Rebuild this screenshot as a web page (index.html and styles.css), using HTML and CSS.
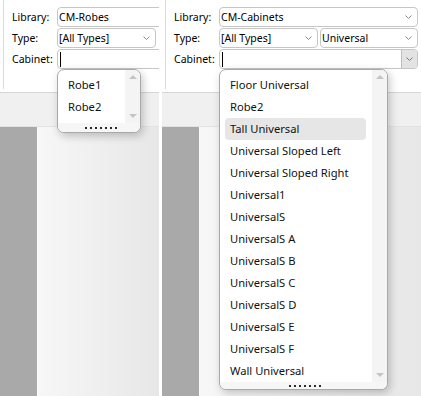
FILE: index.html
```html
<!DOCTYPE html>
<html>
<head>
<meta charset="utf-8">
<link rel="stylesheet" href="styles.css">
</head>
<body>
<div class="panel panel-left">
  <div class="top">
    <div class="group">
      <div class="form">
        <div class="label">Library:</div>
        <div class="ctrl"><div class="box wide"><span class="val">CM-Robes</span></div></div>
        <div class="label">Type:</div>
        <div class="ctrl">
          <div class="box half"><span class="val">[All Types]</span><svg class="chev" width="7" height="4" viewBox="0 0 7 4"><polyline points="0.5,0.5 3.5,3.5 6.5,0.5" fill="none" stroke="#8a8a8a" stroke-width="1"/></svg></div>
        </div>
        <div class="label">Cabinet:</div>
        <div class="ctrl"><div class="box wide"><span class="caret"></span></div></div>
      </div>
    </div>
  </div>
  <div class="strip"></div>
  <div class="canvas"><div class="dark"></div><div class="light"></div></div>
  <div class="popup popup-small">
    <div class="body">
      <div class="list list-small">
        <div class="item">Robe1</div>
        <div class="item">Robe2</div>
      </div>
      <div class="track">
        <span class="arrow up"></span>
        <span class="arrow down"></span>
      </div>
    </div>
    <div class="grip"><i></i><i></i><i></i><i></i><i></i><i></i><i></i></div>
  </div>
</div>

<div class="panel panel-right">
  <div class="top">
    <div class="group">
      <div class="form">
        <div class="label">Library:</div>
        <div class="ctrl"><div class="box wide"><span class="val">CM-Cabinets</span><svg class="chev" width="7" height="4" viewBox="0 0 7 4"><polyline points="0.5,0.5 3.5,3.5 6.5,0.5" fill="none" stroke="#8a8a8a" stroke-width="1"/></svg></div></div>
        <div class="label">Type:</div>
        <div class="ctrl">
          <div class="box half"><span class="val">[All Types]</span><svg class="chev" width="7" height="4" viewBox="0 0 7 4"><polyline points="0.5,0.5 3.5,3.5 6.5,0.5" fill="none" stroke="#8a8a8a" stroke-width="1"/></svg></div>
          <div class="box half2"><span class="val">Universal</span><svg class="chev" width="7" height="4" viewBox="0 0 7 4"><polyline points="0.5,0.5 3.5,3.5 6.5,0.5" fill="none" stroke="#8a8a8a" stroke-width="1"/></svg></div>
        </div>
        <div class="label">Cabinet:</div>
        <div class="ctrl"><div class="box wide"><span class="caret"></span><span class="dropbtn"><svg width="7" height="4" viewBox="0 0 7 4"><polyline points="0.5,0.5 3.5,3.5 6.5,0.5" fill="none" stroke="#7a7a7a" stroke-width="1"/></svg></span></div></div>
      </div>
    </div>
  </div>
  <div class="strip"></div>
  <div class="canvas"><div class="dark"></div><div class="light"></div></div>
  <div class="popup popup-big">
    <div class="body">
      <div class="list">
        <div class="item">Floor Universal</div>
        <div class="item">Robe2</div>
        <div class="item sel">Tall Universal</div>
        <div class="item">Universal Sloped Left</div>
        <div class="item">Universal Sloped Right</div>
        <div class="item">Universal1</div>
        <div class="item">UniversalS</div>
        <div class="item">UniversalS A</div>
        <div class="item">UniversalS B</div>
        <div class="item">UniversalS C</div>
        <div class="item">UniversalS D</div>
        <div class="item">UniversalS E</div>
        <div class="item">UniversalS F</div>
        <div class="item">Wall Universal</div>
      </div>
      <div class="track">
        <span class="arrow up"></span>
        <span class="arrow down"></span>
      </div>
    </div>
    <div class="grip"><i></i><i></i><i></i><i></i><i></i><i></i><i></i></div>
  </div>
</div>
</body>
</html>
```

FILE: styles.css
```css
html, body {
  margin: 0;
  padding: 0;
}
body {
  width: 421px;
  height: 396px;
  overflow: hidden;
  background: #ffffff;
  display: flex;
  font-family: "Noto Sans", "Open Sans", sans-serif;
  color: #111111;
}
.panel {
  position: relative;
  overflow: hidden;
  display: flex;
  flex-direction: column;
  height: 396px;
}
.panel-left {
  width: 159px;
}
.panel-right {
  width: 259px;
  margin-left: 3px;
}
.top {
  height: 92px;
  background: #ffffff;
  border-bottom: 1px solid #d6d6d6;
}
.group {
  margin-left: 3px;
  height: 89px;
  border-left: 1px solid #dadada;
}
.form {
  width: 244px;
  padding: 7px 0 0 8px;
  display: grid;
  grid-template-columns: 45px 199px;
  grid-auto-rows: 20px;
  row-gap: 1px;
}
.label {
  font-size: 10.5px;
  line-height: 20px;
  color: #000;
}
.ctrl {
  display: flex;
  gap: 2px;
}
.box {
  box-sizing: border-box;
  height: 20px;
  border: 1px solid #c6c6c6;
  border-radius: 4px;
  display: flex;
  align-items: center;
  padding-left: 1px;
  position: relative;
  background: #fff;
}
.wide { width: 199px; }
.half { width: 99px; }
.half2 { width: 98px; }
.val {
  font-size: 10.5px;
  color: #000;
  flex: 1;
  white-space: nowrap;
}
.chev {
  margin-right: 5px;
}
.caret {
  width: 1px;
  height: 15px;
  background: #000;
  margin-left: 1px;
}
.dropbtn {
  margin-left: auto;
  width: 15px;
  align-self: stretch;
  background: #e3e3e3;
  border-left: 1px solid #bdbdbd;
  border-radius: 0 3px 3px 0;
  display: flex;
  align-items: center;
  justify-content: center;
}
.strip {
  height: 33px;
  background: #f0f0f0;
  border-bottom: 1px solid #e2e2e2;
}
.canvas {
  flex: 1;
  display: flex;
}
.dark {
  width: 37px;
  background: #a9a9a9;
}
.light {
  flex: 1;
  background: linear-gradient(to right, #f7f7f7, #e7e7e7);
  border-left: 1px solid #fbfbfb;
}
.popup {
  position: absolute;
  left: 57px;
  top: 69px;
  box-sizing: border-box;
  background: #ffffff;
  border: 1px solid #a9a9a9;
  border-radius: 7px;
  box-shadow: 2px 3px 8px rgba(0, 0, 0, 0.22);
  overflow: hidden;
  display: flex;
  flex-direction: column;
}
.popup-small {
  width: 84px;
  height: 64px;
}
.popup-big {
  width: 169px;
  height: 321px;
}
.body {
  display: flex;
  flex: 1;
}
.list {
  flex: 1;
  padding-top: 4px;
}
.list-small {
  padding-bottom: 5px;
}
.item {
  height: 22px;
  line-height: 22px;
  margin: 0 6px 0 5px;
  padding-left: 5px;
  border-radius: 4px;
  font-size: 11.2px;
  color: #111111;
  white-space: nowrap;
}
.item.sel {
  background: #e6e6e6;
}
.track {
  width: 15px;
  background: #f4f4f4;
  position: relative;
}
.arrow {
  position: absolute;
  left: 4px;
  width: 0;
  height: 0;
  border-left: 4px solid transparent;
  border-right: 4px solid transparent;
}
.arrow.up {
  top: 5px;
  border-bottom: 4px solid #c4c4c4;
}
.arrow.down {
  bottom: 5px;
  border-top: 4px solid #c4c4c4;
}
.grip {
  height: 9px;
  background: #f6f6f6;
  display: flex;
  justify-content: center;
  align-items: center;
  gap: 3px;
  padding-left: 3px;
}
.grip i {
  width: 2px;
  height: 2px;
  background: #2a2a2a;
}
```
